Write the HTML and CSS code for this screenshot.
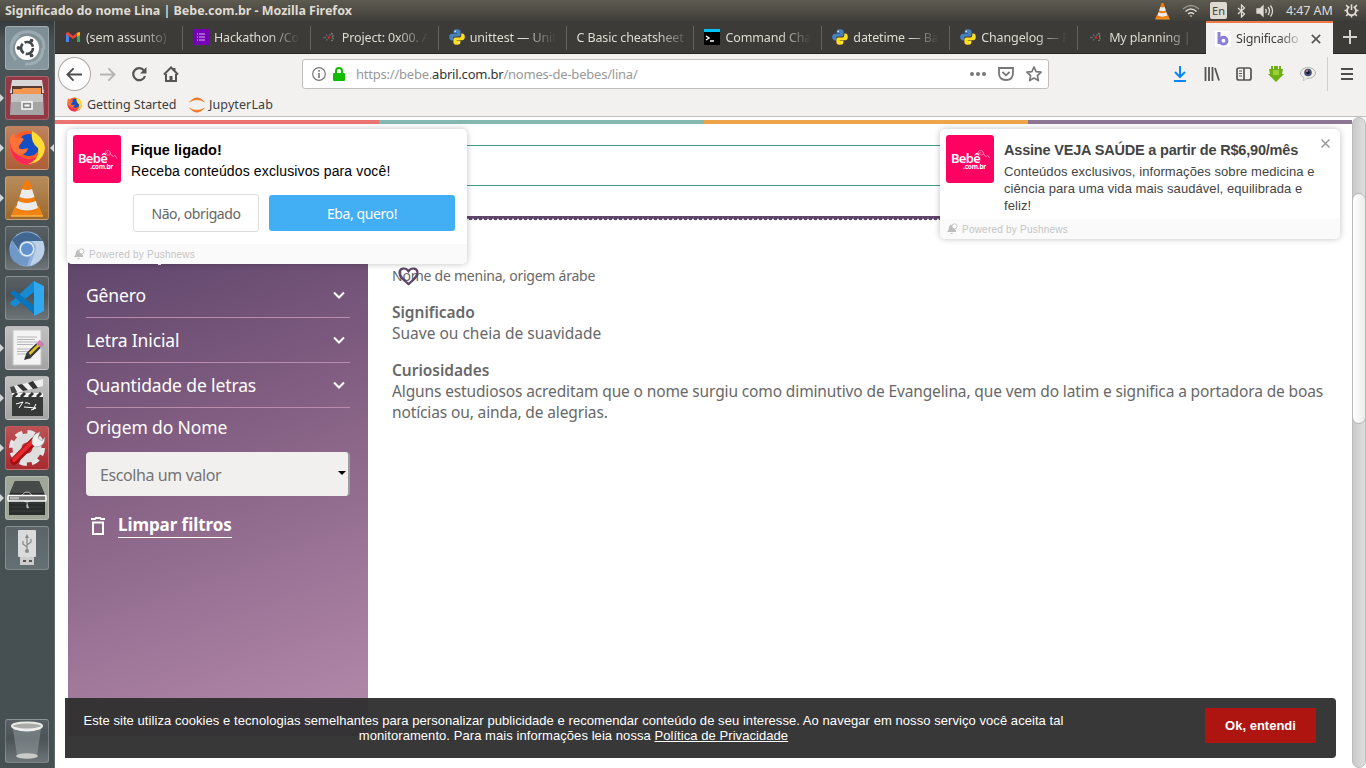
FILE: index.html
```html
<!DOCTYPE html>
<html lang="pt-BR">
<head>
<meta charset="utf-8">
<title>Significado do nome Lina | Bebe.com.br</title>
<link rel="stylesheet" href="styles.css">
</head>
<body>
<svg class="defs" width="0" height="0">
  <symbol id="python" viewBox="0 0 16 16"><path fill="#4682c0" d="M7.800.3C5 .3 4.600 1.500 4.600 2.600V4.200H8.200V4.800H2.800C1 4.800.2 6.300.2 8.100s.9 3.300 2.300 3.300H4V9.600C4 8.400 5 7.500 6.200 7.500H9.800c1 0 1.800-.9 1.800-1.900v-3C11.600 1 10.100.3 7.800.3z"/><path fill="#ffdc20" d="M8.200 15.700c2.800 0 3.200-1.200 3.200-2.300v-1.600H7.800v-.6h5.400c1.800 0 2.600-1.500 2.600-3.300s-.9-3.300-2.300-3.300H12.300v1.800c0 1.200-1 2.100-2.200 2.100H6.200c-1 0-1.800.9-1.800 1.900v3c0 1.600 1.500 2.300 3.800 2.300z"/><circle cx="6.200" cy="2.400" r=".8" fill="#e8eef5"/><circle cx="9.800" cy="13.600" r=".8" fill="#fff5b0"/></symbol>
  <symbol id="holb" viewBox="0 0 16 16"><path d="M2 8.500h3M5 5.500l1.500 1.500M5 11.500l1.500-1.500" stroke="#55656c" stroke-width="1.300"/><path d="M10 4.500c2.500 0 2.500 2.500 1 3.500 1.800 1 1.500 3.500-1 3.500M8.500 5.500l1 1" stroke="#7b7b79" stroke-width="1.300" fill="none" stroke-dasharray="2 .8"/><circle cx="8" cy="8.500" r="1.300" fill="#df2525"/></symbol>
  <symbol id="cone" viewBox="0 0 44 44"><path d="M10 30h24l4 10H6z" fill="#f08416"/><path d="M19 6q3-3 6 0l8 28q-11 5-22 0z" fill="#f47b08"/><path d="M17 13q5 2 10 0l2.500 8q-7.500 3-15 0zM13 25q9 4 18 0l2 7q-11 5-22 0z" fill="#ececec"/><path d="M6 40h32" stroke="#ffb340" stroke-width="1.500"/></symbol>
  <symbol id="fox" viewBox="0 0 44 44"><circle cx="22" cy="22" r="17" fill="#ff5a2a"/><path d="M5 15q0 22 17 24 16-1 18-18-7 14-18 12Q7 29 5 15z" fill="#f82b56"/><circle cx="24" cy="19" r="11" fill="#164fc4"/><path d="M27 5q12 6 13 17-2 15-17 16 12-5 10-16Q25 16 27 5z" fill="#ffdd35"/><path d="M5 12q2-4 3-5l3 5q4-2 8 1l-5 7q-1 4 5 3l4-1q-1 6-8 7Q5 27 5 12z" fill="#ff7139"/></symbol>
  <symbol id="bell" viewBox="0 0 12 12"><path d="M1 9q2-2 2-5 1-3 4-2v2q0 2 3 3v2zM4 10h3q-1 2-3 0z" fill="#bdbdbd"/><circle cx="8.500" cy="3.300" r="2.500" fill="#fff" stroke="#c5c5c5"/></symbol>
  <symbol id="chev" viewBox="0 0 12 8"><path d="M1 1.500l5 5 5-5" fill="none" stroke="#fff" stroke-width="2"/></symbol>
  <symbol id="curl" viewBox="0 0 16 12"><path d="M1.500 5C0 2 4 0 6 2s0 5-2 4-1-3 0-3M6 4q2 1 2.500 3 2 1 3-.5 1.500.5 2 3" fill="none" stroke="#ff9dc3" stroke-width=".9"/></symbol>
</svg>
<div class="desktop">
  <header class="panel">
    <span class="panel-title">Significado do nome Lina | Bebe.com.br - Mozilla Firefox</span>
    <div class="indicators">
      <svg class="i-cone" viewBox="4 2 36 40"><use href="#cone" width="44" height="44"/></svg>
      <svg class="i-wifi" viewBox="0 0 18 14" fill="none" stroke="#dfdbd2" stroke-width="1.500"><path d="M1 5q8-7 16 0" stroke="#99968e"/><path d="M3.500 7.500q5.500-5 11 0"/><path d="M6 10q3-2.500 6 0"/><path d="M7.500 11.500h3L9 13z" fill="#dfdbd2" stroke="none"/></svg>
      <span class="lang">En</span>
      <svg class="i-bt" viewBox="0 0 9 14" fill="none" stroke="#dfdbd2" stroke-width="1.300"><path d="M1 4l6.500 6L4.500 13V1l3 3L1 10"/></svg>
      <svg class="i-vol" viewBox="0 0 18 14" fill="none" stroke="#dfdbd2" stroke-width="1.300"><path d="M1 5h3l3-3v10L4 9H1z" fill="#dfdbd2"/><path d="M9.500 5q1.500 2 0 4M12 3q3 4 0 8M14.500 1.500q4 5.500 0 11"/></svg>
      <span class="clock">4:47 AM</span>
      <svg class="i-gear" viewBox="0 0 16 16" fill="none" stroke="#dfdbd2"><path d="M5.700 4A4.800 4.800 0 1 0 10.300 4" stroke-width="2"/><path d="M8 1.500v6" stroke-width="1.700"/><path d="M2.300 2.300l2 2M13.700 2.300l-2 2M.5 8h2.500M15.500 8H13M2.300 13.700l2-2M13.700 13.700l-2-2M8 15.500V13" stroke-width="1.700"/></svg>
    </div>
  </header>
  <div class="workspace">
    <nav class="launcher">
      <div class="tile dash"><svg viewBox="0 0 44 44"><path d="M6 22Q8 4 26 6q14 3 13 17M38 22q-1 17-18 16M11 34Q0 20 14 9" fill="none" stroke="#b7c5cb" stroke-width="3" opacity=".5"/><circle cx="22" cy="22" r="12" fill="#fff"/><circle cx="22" cy="22" r="6" fill="none" stroke="#44484a" stroke-width="2.600" stroke-dasharray="10.500 2"/><circle cx="13.500" cy="22" r="1.900" fill="#44484a"/><circle cx="26.500" cy="14.600" r="1.900" fill="#44484a"/><circle cx="26.500" cy="29.400" r="1.900" fill="#44484a"/></svg></div>
      <div class="tile files run"><svg viewBox="0 0 44 44"><path d="M7 4h30l2 13H5z" fill="#d8d8d8"/><path d="M7 10h30v9H7z" fill="#553b30"/><path d="M8 13h8l2-1h18v8H8z" fill="#f29850"/><path d="M6 18h32l1 21H5z" fill="#a5a5a5"/><path d="M6 18h32v8H6z" fill="#c4c4c4"/><rect x="17" y="26" width="10" height="7" fill="#888" stroke="#fff" stroke-width="1.500"/><rect x="19.500" y="28.500" width="5" height="2" fill="#fff"/></svg></div>
      <div class="tile firefox run active"><svg><use href="#fox"/></svg></div>
      <div class="tile vlc run"><svg><use href="#cone"/></svg></div>
      <div class="tile chromium"><svg viewBox="0 0 44 44"><circle cx="22" cy="23" r="17.500" fill="#8fb1da"/><path d="M7 14Q22-2 38 15H22q-8 0-8 9z" fill="#41668f"/><path d="M38 15q6 18-13 25l5-14q3-7-4-11z" fill="#bcd0e8"/><path d="M7 14l8 14q4 4 10 3l-3 9Q-1 38 7 14z" fill="#7199c8"/><circle cx="22" cy="23" r="7.500" fill="#e3ecf7"/><circle cx="22" cy="23" r="6" fill="#6191ce"/></svg></div>
      <div class="tile code"><svg viewBox="0 0 44 44"><path d="M29 5v11L10 31l-5-3 1-2z" fill="#168bd3"/><path d="M5 17l4-3 22 17v9z" fill="#0b73b8"/><path d="M29 5l10 5v25l-10 5z" fill="#31a9ef"/></svg></div>
      <div class="tile editor run"><svg viewBox="0 0 44 44"><path d="M8 4h28v35H8z" fill="#f3f3f3" stroke="#c5c5c5"/><path d="M12 11h20M12 13.500h18M12 16h20M12 18.500h16M12 23h14M12 25.500h12M12 28h9" stroke="#a5a5a5" stroke-width=".8"/><path d="M19 34l2.500-7 5 5z" fill="#333"/><path d="M23.500 29.500l10-10" stroke="#383838" stroke-width="6.500"/><path d="M24.500 28l9.500-9.500" stroke="#e0c329" stroke-width="2.500"/><path d="M33.500 19.500l3.500-3.500" stroke="#cd7dae" stroke-width="6.500"/></svg></div>
      <div class="tile video run"><svg viewBox="0 0 44 44"><path d="M7 19h31v21H7z" fill="#373938"/><path d="M5 11L38 3v7L8 18z" fill="#eee"/><path d="M12 9l6 6 5-1-6-6zM23 7l5 6 5-1-5-7z" fill="#333"/><path d="M5 11l4-1 3 6-5 2z" fill="#444"/><path d="M7 17h31v4H7z" fill="#f4f4f4"/><path d="M12 17l-4 4M20 17l-4 4M28 17l-4 4M36 17l-4 4" stroke="#333" stroke-width="3"/><path d="M11 28l7-2-4 6M20 27q2-1 5 1M19 31l12 1-5 2M31 28l-3 6" stroke="#fff" fill="none"/></svg></div>
      <div class="tile settings run"><svg viewBox="0 0 44 44"><circle cx="22" cy="22" r="15" fill="none" stroke="#e5e5e5" stroke-width="6" stroke-dasharray="7 4.780"/><circle cx="22" cy="22" r="10" fill="none" stroke="#dedede" stroke-width="9"/><path d="M9 35L29 15" stroke="#a40e13" stroke-width="7.500" stroke-linecap="round"/><path d="M9 34L27 16" stroke="#e72a2d" stroke-width="4" stroke-linecap="round"/><path d="M27 18q-1-10 8-12l-2 6 4 3 3-4q0 10-10 10z" fill="#f0f0ee" stroke="#999" stroke-width=".6"/></svg></div>
      <div class="tile package run"><svg viewBox="0 0 44 44"><path d="M10 5h24l6 14v20H4V19z" fill="#292d2b"/><path d="M10 5h24l5 12H5z" fill="#464a48"/><path d="M6 27h32M6 31h32M6 35h32" stroke="#3a3e3c"/><circle cx="22" cy="21" r="5" fill="none" stroke="#bbb"/><path d="M22 26l2 6q-4 2-2-6z" fill="#bbb"/><rect x="3" y="19.500" width="38" height="5.500" rx="1" fill="#777" stroke="#fff" stroke-width="1.500"/><rect x="5" y="21" width="9" height="2.500" fill="#b5b5b5"/></svg></div>
      <div class="tile usb"><svg viewBox="0 0 44 44"><rect x="13" y="4" width="18" height="27" rx="1" fill="#dadbdb"/><path d="M15 31h14v8H15z" fill="#ccc"/><path d="M18 34h3v2h-3zM24 34h3v2h-3z" fill="#555"/><path d="M22 10v16M22 21l-4-3v-3M22 19l4-3v-3" fill="none" stroke="#888" stroke-width="1.200"/><circle cx="22" cy="25" r="2" fill="#888"/><path d="M20 12l2-4 2 4z" fill="#888"/></svg></div>
      <div class="tile trash"><svg viewBox="0 0 44 44"><path d="M8 10h28l-4 27q-10 4-20 0z" fill="#a5afb3" opacity=".42"/><ellipse cx="22" cy="37" rx="11" ry="2.800" fill="#c9cbc8"/><ellipse cx="22" cy="7" rx="15" ry="3.500" fill="#a8aaa8" stroke="#e8e8e4" stroke-width="2"/><path d="M9 9q13 5 26 0" stroke="#eee" stroke-width="2" fill="none"/></svg></div>
    </nav>
    <div class="browser">
      <div class="tabs">
        <div class="tab"><svg viewBox="0 0 16 16"><path d="M1 13V4l2-1 5 4 5-4 2 1v9h-3V7L8 10 4 7v6z" fill="#ea4335"/><path d="M1 5l3 3v5H1z" fill="#4285f4"/><path d="M15 5l-3 3v5h3z" fill="#34a853"/><path d="M12 4l3-1v3l-3 2z" fill="#fbbc04"/></svg><span>(sem assunto) -</span></div>
        <div class="tab"><svg viewBox="0 0 16 16"><path fill="#7500b6" d="M0 0h16v16H0z"/><path d="M4 5h1M4 8h1M4 11h1M6 5h6M6 8h6M6 11h6" stroke="#d9b5ef"/></svg><span>Hackathon /Co</span></div>
        <div class="tab"><svg><use href="#holb"/></svg><span>Project: 0x00. A</span></div>
        <div class="tab"><svg><use href="#python"/></svg><span>unittest — Unit</span></div>
        <div class="tab noicon"><span>C Basic cheatsheet</span></div>
        <div class="tab"><svg viewBox="0 0 16 16"><path d="M0 0h16v16H0z"/><path fill="#00c4f5" d="M0 0h16v3H0z"/><path d="M2 7l3 2-3 2M6 12h4" fill="none" stroke="#fff" stroke-width="1.400"/></svg><span>Command Cha</span></div>
        <div class="tab"><svg><use href="#python"/></svg><span>datetime — Ba</span></div>
        <div class="tab"><svg><use href="#python"/></svg><span>Changelog — F</span></div>
        <div class="tab last"><svg><use href="#holb"/></svg><span>My planning | A</span></div>
        <div class="tab current"><svg viewBox="0 0 16 16"><path fill="#fff" d="M0 0h16v16H0z"/><path d="M4 1v12" stroke="#8a80da" stroke-width="3"/><circle cx="8.500" cy="9.700" r="3.400" fill="none" stroke="#8a80da" stroke-width="3"/></svg><span>Significado</span><svg class="close" viewBox="0 0 12 12"><path d="M1 1l10 10M11 1L1 11" stroke="#555" stroke-width="1.900"/></svg></div>
        <svg class="plus" viewBox="0 0 14 14"><path d="M7 0v14M0 7h14" stroke="#d5d3cf" stroke-width="2"/></svg>
      </div>
      <div class="toolbar">
        <div class="back"><svg viewBox="0 0 18 16"><path d="M17 8H2M8 1.500L1.500 8 8 14.500" fill="none" stroke="#4d4d4d" stroke-width="2"/></svg></div>
        <svg class="fwd" viewBox="0 0 18 16"><path d="M1 8h15M10 1.500L16.500 8 10 14.500" fill="none" stroke="#b5b4b3" stroke-width="2"/></svg>
        <svg class="reload" viewBox="0 0 16 16"><path d="M13 4.500A6 6 0 1 0 14 10" fill="none" stroke="#555" stroke-width="2.200"/><path d="M15.500 1v6.500H9z" fill="#555"/></svg>
        <svg class="home" viewBox="0 0 16 16"><path d="M1 8.500L8 1.500l7 7M3 8v7h10V8M11.500 2v3" fill="none" stroke="#555" stroke-width="2"/><path d="M6.500 15v-5h3v5z" fill="#555"/></svg>
        <div class="url">
          <svg class="info" viewBox="0 0 14 14"><circle cx="7" cy="7" r="6.300" fill="none" stroke="#777" stroke-width="1.200"/><path d="M7 6v5M7 3v1.700" stroke="#777" stroke-width="1.600"/></svg>
          <svg class="lock" viewBox="0 0 12 14"><path d="M3 7V4q0-3 3-3t3 3v3" fill="none" stroke="#12bc00" stroke-width="2"/><rect y="6" width="12" height="8" rx="1" fill="#12bc00"/></svg>
          <span class="address">https://bebe.<b>abril.com.br</b>/nomes-de-bebes/lina/</span>
          <svg class="dots" viewBox="0 0 16 4" fill="#777"><circle cx="2" cy="2" r="2"/><circle cx="8" cy="2" r="2"/><circle cx="14" cy="2" r="2"/></svg>
          <svg class="pocket" viewBox="0 0 16 14" fill="none" stroke="#777" stroke-width="1.800"><path d="M1 1h14v5q0 7-7 7T1 6z"/><path d="M4.500 5L8 8.300 11.500 5"/></svg>
          <svg class="star" viewBox="0 0 16 16"><path d="M8 1l2.100 4.600 5 .6-3.700 3.400 1 5L8 12.100l-4.400 2.500 1-5L.9 6.200l5-.6z" fill="none" stroke="#777" stroke-width="1.700" stroke-linejoin="round"/></svg>
        </div>
        <div class="actions">
          <svg viewBox="0 0 16 16"><path d="M7 0v10M2 6l5 5 5-5M1 15h12" transform="translate(1)" fill="none" stroke="#0a84ff" stroke-width="2"/></svg>
          <svg viewBox="0 0 16 16"><path d="M1.500 1v14M5 1v14M8.500 1v14M11 2l4 12.500" stroke="#555" stroke-width="1.800"/></svg>
          <svg viewBox="0 0 16 16" fill="none" stroke="#555" stroke-width="1.700"><rect x="1" y="2" width="14" height="12" rx="2"/><path d="M8 2v12"/><path d="M3 5h3M3 7.500h3M3 10h3" stroke-width="1"/></svg>
          <svg viewBox="0 0 16 16"><path d="M3 0h10v3h2l-1 5h2l-8 8-8-8h2L1 3h2z" fill="#6fae17"/><path d="M5.500 0v3M10.500 0v3" stroke="#f2f1f0"/><path d="M5 4h6v5H5z" fill="#9cd136"/></svg>
          <svg viewBox="0 0 16 16"><ellipse cx="8" cy="7" rx="7.500" ry="5.500" fill="#eee" stroke="#9a9a9a" stroke-width=".7"/><path d="M4 11l-1 4 5-3" fill="#eee" stroke="#aaa" stroke-width=".5"/><circle cx="8" cy="6.500" r="3.800" fill="#445078"/><circle cx="8" cy="6.500" r="1.800" fill="#171725"/><circle cx="7" cy="5" r="1" fill="#d68d80"/></svg>
        </div>
        <svg class="menu" viewBox="0 0 12 12"><path d="M0 1h12M0 6h12M0 11h12" stroke="#4d4d4d" stroke-width="2"/></svg>
      </div>
      <div class="bookmarks">
        <svg viewBox="4 4 36 36"><use href="#fox" width="44" height="44"/></svg><span class="bm1">Getting Started</span>
        <svg class="jup" viewBox="0 0 16 16"><path d="M.5 5Q8-3.500 15.500 5 8 .5.500 5zM.5 11Q8 19.500 15.500 11 8 15.500.500 11z" fill="#f37726" stroke="#f37726" stroke-width=".5"/></svg><span class="bm2">JupyterLab</span>
      </div>
      <div class="viewport">
        <main class="page">
          <div class="stripe"><i></i><i></i><i></i><i></i></div>
          <div class="masthead"></div>
          <div class="dotted"></div>
          <div class="columns">
            <aside class="filters">
              <div class="filter"><span>Gênero</span><svg><use href="#chev"/></svg></div>
              <div class="filter"><span>Letra Inicial</span><svg><use href="#chev"/></svg></div>
              <div class="filter"><span>Quantidade de letras</span><svg><use href="#chev"/></svg></div>
              <div class="origin"><span>Origem do Nome</span></div>
              <div class="select"><span>Escolha um valor</span><i></i></div>
              <div class="clear"><svg viewBox="0 0 14 18"><path d="M0 2h4l1-1h4l1 1h4M2 5.500h10V17H2z" fill="none" stroke="#fff" stroke-width="2"/></svg><a>Limpar filtros</a></div>
            </aside>
            <article class="name">
              <p class="kind">Nome de menina, origem árabe<svg class="heart" viewBox="0 0 22 20"><path d="M11 18C4 12 1.500 9.500 1.500 6 1.500 1 8 0 11 4.500 14 0 20.500 1 20.500 6c0 3.500-2.500 6-9.500 12z" fill="none" stroke="#5d4569" stroke-width="2.300"/></svg></p>
              <h2>Significado</h2>
              <p class="l1">Suave ou cheia de suavidade</p>
              <h2>Curiosidades</h2>
              <p class="l2">Alguns estudiosos acreditam que o nome surgiu como diminutivo de Evangelina, que vem do latim e significa a portadora de boas</p>
              <p class="l2">notícias ou, ainda, de alegrias.</p>
            </article>
          </div>
        </main>
        <div class="scrollbar"><div class="thumb"></div></div>
        <section class="push optin">
          <div class="push-body">
            <div class="logo"><span>Bebê</span><small>.com.br</small><svg><use href="#curl"/></svg></div>
            <div class="msg"><strong>Fique ligado!</strong><p>Receba conteúdos exclusivos para você!</p></div>
          </div>
          <div class="buttons"><span class="no">Não, obrigado</span><span class="yes">Eba, quero!</span></div>
          <footer><svg><use href="#bell"/></svg>Powered by Pushnews</footer>
        </section>
        <section class="push offer">
          <div class="push-body">
            <div class="logo"><span>Bebê</span><small>.com.br</small><svg><use href="#curl"/></svg></div>
            <div class="msg"><strong>Assine VEJA SAÚDE a partir de R$6,90/mês</strong><p>Conteúdos exclusivos, informações sobre medicina e<br>ciência para uma vida mais saudável, equilibrada e<br>feliz!</p></div>
          </div>
          <svg class="x" viewBox="0 0 9 9"><path d="M.5.5l8 8M8.500.5l-8 8" stroke="#999" stroke-width="1.500"/></svg>
          <footer><svg><use href="#bell"/></svg>Powered by Pushnews</footer>
        </section>
        <section class="cookies">
          <p>Este site utiliza cookies e tecnologias semelhantes para personalizar publicidade e recomendar conteúdo de seu interesse. Ao navegar em nosso serviço você aceita tal<br>monitoramento. Para mais informações leia nossa <u>Política de Privacidade</u></p>
          <span class="ok">Ok, entendi</span>
        </section>
      </div>
    </div>
  </div>
</div>
</body>
</html>
```
FILE: styles.css
```css
* { box-sizing: border-box; }
body { margin: 0; overflow: hidden; font-family: "Noto Sans", sans-serif; }
p, h2 { margin: 0; }
svg { display: block; flex: none; }
.defs { position: absolute; }
.desktop { width: 1366px; height: 768px; display: flex; flex-direction: column; }
.desktop span { white-space: nowrap; }

.panel { height: 21px; flex: none; display: flex; justify-content: space-between; align-items: center; padding: 0 7px 0 5px; background: linear-gradient(#5d5a50, #403e39); color: #dfdbd2; font-size: 13px; }
.panel-title { font-weight: 700; font-size: 12.5px; letter-spacing: -.03px; }
.indicators { display: flex; align-items: center; }
.i-cone { width: 17px; height: 18px; margin-right: 11px; }
.i-wifi { width: 18px; height: 14px; margin-right: 10px; }
.lang { background: #dfdbd2; color: #45433e; border-radius: 2px; width: 17px; height: 17px; line-height: 17px; font-size: 11px; text-align: center; margin-right: 10px; }
.i-bt { width: 9px; height: 14px; margin-right: 10px; }
.i-vol { width: 18px; height: 14px; margin-right: 12px; }
.clock { font-size: 12.5px; letter-spacing: -.1px; width: 47px; margin-right: 11px; }
.i-gear { width: 15px; height: 15px; }

.workspace { flex: 1; min-height: 0; display: flex; }
.launcher { width: 55px; flex: none; padding: 5px 0 5px 5px; display: flex; flex-direction: column; gap: 6px; background: linear-gradient(#353b3e, #495254 20px, #465053); border-right: 1px solid #5f686a; }
.tile { position: relative; width: 44px; height: 44px; flex: none; border-radius: 3px; border: 1px solid rgba(255,255,255,.22); background: linear-gradient(#596063, #4b5356 45%, #6d7578); }
.tile svg { width: 44px; height: 44px; margin: -1px; }
.tile.dash { background: linear-gradient(#7d8d94, #86979e); }
.tile.files { background: #933845; }
.tile.firefox { background: linear-gradient(#bd835f, #ad5f37); }
.tile.vlc { background: linear-gradient(#b78d5d, #9e682c); }
.tile.editor, .tile.video { background: linear-gradient(#c0c0c0, #a3a3a3); }
.tile.settings { background: linear-gradient(#bd5255, #a82b30); }
.tile.package { background: #9fa799; }
.tile.usb { background: linear-gradient(#5c6467, #657074); }
.tile.trash { margin-top: auto; }
.run::before { content: ""; position: absolute; left: -6px; top: 17px; border: 4px solid transparent; border-left-color: #d3d6d7; border-right: 0; }
.active::after { content: ""; position: absolute; right: -6px; top: 17px; border: 4px solid transparent; border-right-color: #d3d6d7; border-left: 0; }

.browser { flex: 1; min-width: 0; display: flex; flex-direction: column; background: #f2f1f0; }
.tabs { height: 33px; flex: none; display: flex; background: #3c3b37; border-bottom: 1px solid #262522; color: #dfdbd2; }
.tab { position: relative; width: 127.900px; flex: none; padding: 0 10px; display: flex; align-items: center; gap: 5px; font-size: 12.500px; letter-spacing: -.13px; }
.tab::after { content: ""; position: absolute; right: 0; top: 5px; width: 1px; height: 24px; background: #66645f; }
.tab svg { width: 16px; height: 16px; }
.tab span { width: 86px; overflow: hidden; -webkit-mask-image: linear-gradient(90deg, #000 64%, transparent); mask-image: linear-gradient(90deg, #000 64%, transparent); }
.tab.noicon span { width: 108px; -webkit-mask-image: linear-gradient(90deg, #000 75%, transparent 105%); mask-image: linear-gradient(90deg, #000 75%, transparent 105%); }
.tab.last::after, .tab.current::after { display: none; }
.tab.current { height: 33px; width: 127px; background: #f2f1f0; border-top: 2px solid #f07746; color: #3d3d3d; padding: 0 9px; }
.tab.current span { width: 68px; padding-bottom: 1px; letter-spacing: -.2px; }
.tab .close { width: 10px; height: 10px; margin-left: 2px; }
.plus { width: 14px; height: 14px; margin: 9px 0 0 10px; }

.toolbar { height: 38px; flex: none; margin-top: 1px; display: flex; align-items: center; padding: 0 13px 0 3px; }
.back { width: 34px; height: 34px; border: 1px solid #aaa9a8; border-radius: 50%; background: #fcfcfc; display: flex; align-items: center; justify-content: center; }
.back svg, .fwd { width: 17px; height: 15px; }
.fwd { margin-left: 8px; }
.reload { width: 16px; height: 16px; margin-left: 15px; }
.home { width: 16px; height: 16px; margin-left: 16px; }
.url { width: 747px; height: 30px; flex: none; margin-left: 123px; border: 1px solid #c0bfbd; border-radius: 3px; background: #fff; display: flex; align-items: center; padding: 0 6px 0 9px; }
.info { width: 14px; height: 14px; margin-right: 7px; }
.lock { width: 12px; height: 14px; margin-right: 11px; }
.address { flex: 1; font-size: 13px; color: #999; letter-spacing: -.22px; }
.address b { font-weight: 400; color: #333; }
.dots { width: 16px; height: 4px; margin-right: 12px; }
.pocket { width: 16px; height: 14px; margin-right: 12px; }
.star { width: 16px; height: 16px; }
.actions { display: flex; gap: 16px; margin-left: 123px; padding-right: 11px; }
.actions svg { width: 16px; height: 16px; }
.menu { width: 26px; height: 34px; padding: 11px 0 11px 13px; border-left: 1px solid #d0cfce; }
.bookmarks { height: 23px; flex: none; display: flex; align-items: center; padding: 0 0 0 12px; font-size: 12.500px; color: #3d3d3d; }
.bookmarks svg { width: 15px; height: 15px; }
.bm1, .bm2 { margin-left: 5px; letter-spacing: -.03px; }
.bm2 { letter-spacing: .1px; margin-left: 4px; }
.bm1 { width: 90px; }
.bookmarks .jup { margin-left: 12px; width: 16px; height: 16px; }

.viewport { position: relative; flex: 1; min-height: 0; display: flex; background: #fff; border-top: 1px solid #c2c1c0; }
.page { width: 1297px; padding-top: 3px; overflow: hidden; }
.stripe { display: flex; height: 4px; }
.stripe i { flex: 1; background: #e97471; }
.stripe i:nth-child(2) { background: #84b8b0; }
.stripe i:nth-child(3) { background: #eea54a; }
.stripe i:nth-child(4) { background: #8d7594; }
.masthead { height: 41px; margin: 21px 13px 0; border: 1px solid #45988f; border-width: 1px 0; }
.dotted { height: 5px; margin: 30px 13px 0; background: radial-gradient(circle at 2.500px 2px, #5d4569 1.900px, transparent 2.600px) 0 0 / 5px 5px repeat-x, linear-gradient(#5d4569, #5d4569) 0 0 / 100% 2px no-repeat; }
.columns { display: flex; margin: 31px 0 0 13px; gap: 24px; }
.filters { width: 300px; height: 484px; padding: 21px 18px; background: linear-gradient(160deg, #5f456b, #7f5c80 35%, #b68bac); color: #fff; font-size: 17.500px; }
.filters::before { content: ""; position: absolute; left: 103px; top: 146px; width: 3px; height: 2px; background: #fff; }
.filter { display: flex; justify-content: space-between; align-items: center; height: 45px; border-bottom: 1px solid #b78cad; padding: 0 5px 0 0; }
.filter svg { width: 12px; height: 8px; }
.filter span, .origin span { letter-spacing: -.13px; }
.origin { height: 44px; line-height: 38px; }
.select { height: 44px; border-radius: 4px; background: #f1f0ee; border-right: 2px solid #9b9f9b; display: flex; align-items: center; justify-content: space-between; padding: 2px 2px 0 14px; font-size: 16px; color: #757575; letter-spacing: -.4px; }
.select i { border: 4px solid transparent; border-top-color: #000; border-bottom: 0; margin-top: -5px; }
.clear { display: flex; align-items: center; margin-top: 18px; padding-left: 5px; gap: 13px; }
.clear svg { width: 14px; height: 18px; }
.clear a { font-weight: 700; font-size: 17px; line-height: 22px; height: 24px; letter-spacing: -.07px; border-bottom: 1px solid #fff; }
.name { width: 950px; padding-top: 13px; color: #686868; font-size: 15.500px; line-height: 21px; white-space: nowrap; }
.kind { position: relative; font-size: 14px; height: 37px; letter-spacing: -.24px; }
.heart { position: absolute; left: 6px; top: 2px; width: 21px; height: 19px; }
.name h2 { font-size: 15.500px; line-height: 21px; font-weight: 600; letter-spacing: -.03px; }
.l1 { height: 37px; letter-spacing: 0; }
.l2 { letter-spacing: -.13px; }

.scrollbar { width: 14px; background: linear-gradient(90deg, #c9c9c9, #dedede); border: 1px solid #bbb; border-radius: 7px; padding-top: 75px; }
.thumb { height: 231px; margin: 0 -1px; border: 1px solid #b8b8b8; border-radius: 7px; background: linear-gradient(90deg, #fff, #ececea); }

.push { position: absolute; top: 12px; width: 400px; background: #fff; border-radius: 5px; box-shadow: 0 0 6px rgba(0,0,0,.25); overflow: hidden; font-family: "Liberation Sans", sans-serif; display: flex; flex-direction: column; }
.optin { left: 12px; height: 135px; color: #000; }
.offer { left: 885px; height: 110px; color: #444; }
.push-body { display: flex; padding: 6px 6px 0; gap: 10px; }
.logo { position: relative; width: 48px; height: 48px; flex: none; border-radius: 3px; background: #ff0063; color: #fff; font-family: "Noto Sans", sans-serif; padding: 16px 0 0 5px; }
.logo span { display: block; font-size: 13px; line-height: 14px; font-weight: 600; letter-spacing: -.7px; }
.logo small { display: block; font-size: 6.500px; font-weight: 700; line-height: 6px; margin: -1px 0 0 12px; letter-spacing: -.2px; }
.logo svg { position: absolute; left: 31px; top: 14px; width: 15px; height: 12px; }
.msg strong { display: block; font-size: 14.500px; line-height: 20px; white-space: nowrap; letter-spacing: .05px; }
.offer .msg strong { letter-spacing: -.19px; }
.optin .msg { padding-top: 5px; font-size: 14px; line-height: 22px; letter-spacing: .13px; }
.offer .msg { padding-top: 5px; font-size: 13px; line-height: 17px; white-space: nowrap; letter-spacing: .07px; }
.offer .msg p { padding-top: 3px; }
.buttons { display: flex; gap: 10px; padding: 11px 12px 0 66px; font-family: "Noto Sans", sans-serif; font-size: 14px; letter-spacing: -.4px; }
.no { width: 126px; height: 38px; border: 1px solid #ddd; border-radius: 3px; line-height: 37px; text-align: center; color: #666; }
.yes { width: 186px; height: 36px; margin-top: 1px; border-radius: 3px; line-height: 37px; text-align: center; color: #fff; background: #42aef4; }
.push footer { margin-top: auto; height: 20px; background: #fafafa; color: #c5c5c5; font-size: 10px; letter-spacing: .22px; display: flex; align-items: center; gap: 4px; padding-left: 6px; }
.push footer svg { width: 12px; height: 12px; }
.x { position: absolute; right: 10px; top: 10px; width: 9px; height: 9px; }
.cookies { position: absolute; left: 10px; top: 581px; width: 1271px; height: 60px; border-radius: 0 4px 4px 0; background: rgba(48,48,48,.96); color: #fff; font: 13px/15px "Liberation Sans", sans-serif; display: flex; justify-content: space-between; padding: 10px 20px 0 18px; }
.cookies p { width: 981px; padding-top: 5px; text-align: center; white-space: nowrap; letter-spacing: .062px; }
.ok { width: 111px; height: 35px; background: #ae1410; line-height: 35px; text-align: center; font-weight: 700; }
```
